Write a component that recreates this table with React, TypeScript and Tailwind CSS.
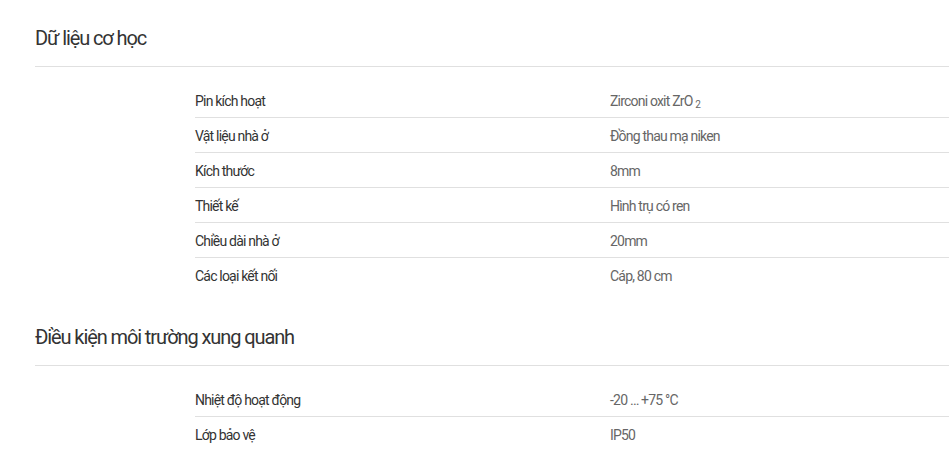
const sections = [
  {
    title: 'Dữ liệu cơ học',
    rows: [
      ['Pin kích hoạt', 'zro2'],
      ['Vật liệu nhà ở', 'Đồng thau mạ niken'],
      ['Kích thước', '8mm'],
      ['Thiết kế', 'Hình trụ có ren'],
      ['Chiều dài nhà ở', '20mm'],
      ['Các loại kết nối', 'Cáp, 80 cm'],
    ],
  },
  {
    title: 'Điều kiện môi trường xung quanh',
    rows: [
      ['Nhiệt độ hoạt động', '-20 … +75 °C'],
      ['Lớp bảo vệ', 'IP50'],
    ],
  },
];

function Value({ v }: { v: string }) {
  if (v === 'zro2') {
    return (
      <span>
        Zirconi oxit ZrO <sub className="text-[10px]">2</sub>
      </span>
    );
  }
  return <span>{v}</span>;
}

export default function App() {
  return (
    <div className="min-h-[467px] bg-white pl-[35px] font-['Roboto',sans-serif]">
      {sections.map((s, i) => (
        <section key={s.title} className={i > 0 ? 'mt-[6px]' : ''}>
          <h2 className="border-b border-[#e0e0e0] pt-6 pb-[14px] text-[20px] leading-[28px] tracking-[-1.1px] text-[#333]">
            {s.title}
          </h2>
          <div className="ml-[160px] mt-4">
            {s.rows.map(([k, v], j) => (
              <div
                key={k}
                className={
                  'grid h-[35px] grid-cols-[415px_1fr] items-center pt-[2px] text-[14px] tracking-[-0.8px] ' +
                  (j < s.rows.length - 1 ? 'border-b border-[#e0e0e0]' : '')
                }
              >
                <span className="text-[#333]">{k}</span>
                <span className="text-[#666]">
                  <Value v={v} />
                </span>
              </div>
            ))}
          </div>
        </section>
      ))}
    </div>
  );
}
